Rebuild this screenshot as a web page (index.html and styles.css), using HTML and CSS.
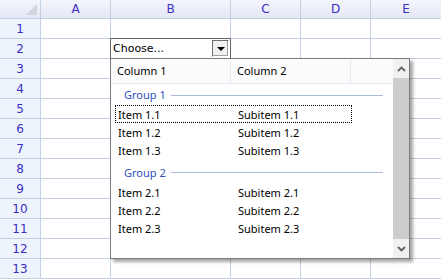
FILE: index.html
```html
<!DOCTYPE html>
<html lang="en">
<head>
  <meta charset="UTF-8" />
  <title>Grid Combo</title>
  <link rel="stylesheet" href="styles.css">
</head>
<body>

<div class="sheet">
  <div class="grid">
    <div class="corner"><span class="corner-tri"></span></div>
    <div class="col-head">A</div>
    <div class="col-head">B</div>
    <div class="col-head">C</div>
    <div class="col-head">D</div>
    <div class="col-head">E</div>
  </div>
  <div class="grid" id="rows"></div>

  <!-- cell editor -->
  <div class="combo">
    <span class="combo-text">Choose...</span>
    <span class="combo-btn"><span class="arrow"></span></span>
  </div>

  <div class="popup">
    <div class="list">
      <div class="list-head">
        <div class="lh">Column 1</div>
        <div class="lh">Column 2</div>
        <div class="lh lh-rest"></div>
      </div>
      <div class="group"><span>Group 1</span><i></i></div>
      <div class="item focused"><span>Item 1.1</span><span>Subitem 1.1</span></div>
      <div class="item"><span>Item 1.2</span><span>Subitem 1.2</span></div>
      <div class="item"><span>Item 1.3</span><span>Subitem 1.3</span></div>
      <div class="group g2"><span>Group 2</span><i></i></div>
      <div class="item"><span>Item 2.1</span><span>Subitem 2.1</span></div>
      <div class="item"><span>Item 2.2</span><span>Subitem 2.2</span></div>
      <div class="item"><span>Item 2.3</span><span>Subitem 2.3</span></div>
    </div>
    <div class="scroll">
      <div class="sb-btn">
        <svg width="9" height="6" viewBox="0 0 9 6"><path d="M1 5 L4.5 1.5 L8 5" fill="none" stroke="#606060" stroke-width="1.8"/></svg>
      </div>
      <div class="thumb"></div>
      <div class="sb-btn">
        <svg width="9" height="6" viewBox="0 0 9 6"><path d="M1 1 L4.5 4.5 L8 1" fill="none" stroke="#606060" stroke-width="1.8"/></svg>
      </div>
    </div>
  </div>
</div>

<script>
  const rows = document.getElementById("rows");
  for (let r = 1; r <= 13; r++) {
    rows.innerHTML += `<div class="row-head">${r}</div>` +
      '<div class="cell"></div>'.repeat(5);
  }
</script>

</body>
</html>
```

FILE: styles.css
```css
body { margin: 0; background: #fff; font-family: "Noto Sans", sans-serif; }
.sheet { position: relative; width: 441px; height: 279px; overflow: hidden; }

.grid {
  display: grid;
  grid-template-columns: 41px 70px 120px 70px 70px 70px;
}
.corner, .col-head {
  height: 18px;
  border-right: 1px solid #c4d0e4;
  border-bottom: 1px solid #c4d0e4;
  background: linear-gradient(#f4f5fc, #e5e7f5);
  box-sizing: content-box;
}
.corner { position: relative; width: 40px; }
.corner-tri {
  position: absolute; right: 3px; bottom: 3px;
  width: 0; height: 0;
  border-left: 11px solid transparent;
  border-bottom: 11px solid #d2d4de;
}
.col-head {
  font-family: "DejaVu Sans", sans-serif;
  font-size: 12px; color: #3b2fc0;
  text-align: center; line-height: 19px;
}
.col-head:last-child { border-right: none; }
.row-head, .cell {
  height: 19px;
  border-right: 1px solid #c4d0e4;
  border-bottom: 1px solid #c4d0e4;
}
.row-head {
  background: #eef4fc;
  font-family: "DejaVu Sans", sans-serif;
  font-size: 12px; color: #3b2fc0;
  text-align: center; line-height: 20px;
}
.cell:nth-child(6n) { border-right: none; }

/* combo editor in B2 */
.combo {
  position: absolute; left: 110px; top: 38px;
  width: 119px; height: 19px;
  border: 1px solid #646464;
  background: #fff;
  display: flex; align-items: center;
}
.combo-text {
  flex: 1; padding-left: 2px;
  font-family: "DejaVu Sans", sans-serif; font-size: 11px; color: #000;
}
.combo-btn {
  width: 15px; height: 15px; margin-right: 1px;
  border: 1px solid #707070;
  border-right-color: #fff; border-bottom-color: #fff;
  box-shadow: inset -1px -1px 0 #a0a0a0;
  background: #f0f0f0;
  display: flex; align-items: center; justify-content: center;
}
.arrow {
  width: 0; height: 0;
  border-left: 4px solid transparent;
  border-right: 4px solid transparent;
  border-top: 4px solid #000;
  margin-top: 1px;
}

/* dropdown list */
.popup {
  position: absolute; left: 110px; top: 58px;
  width: 298px; height: 199px;
  border: 1px solid #7a7a7a;
  background: #fff;
  box-shadow: 3px 3px 3px rgba(0,0,0,0.35);
  display: flex;
}
.list { flex: 1; min-width: 0; font-size: 11px; color: #000; }
.list-head {
  display: flex; height: 24px;
  border-bottom: 1px solid #e2eaf6;
  background: #fbfbfb;
}
.lh {
  width: 113px; padding-left: 6px;
  line-height: 24px;
  border-right: 1px solid #e2eaf6;
}
.lh-rest { flex: 1; border-right: none; }
.group {
  display: flex; align-items: center;
  height: 21px; padding-left: 13px; padding-right: 10px;
  color: #2f4fc0;
}
.group i { flex: 1; height: 1px; background: #a9b8d6; margin-left: 5px; margin-top: 1px; }
.group.g2 { margin-top: 2px; height: 22px; }
.item {
  display: flex; height: 18px; line-height: 18px;
  margin: 0 41px 0 4px; padding-left: 2px;
  border: 1px solid transparent;
  box-sizing: border-box;
}
.item span { width: 120px; flex-shrink: 0; }
.item.focused { border: 1px dotted #000; }

.scroll {
  width: 16px; flex-shrink: 0; background: #f0f0f0;
  display: flex; flex-direction: column;
}
.sb-btn { height: 19px; display: flex; align-items: center; justify-content: center; }
.thumb { flex: 1; background: #cdcdcd; }
```
